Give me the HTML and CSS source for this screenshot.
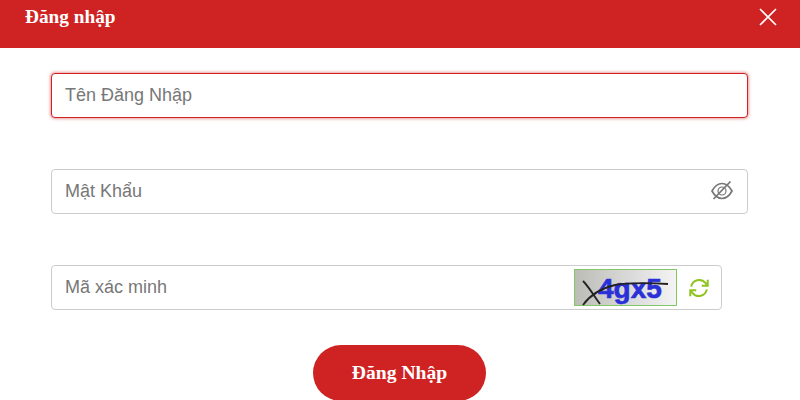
FILE: index.html
```html
<!DOCTYPE html>
<html lang="vi">
<head>
    <meta charset="UTF-8">
    <meta name="viewport" content="width=device-width, initial-scale=1.0">
    <title>Đăng nhập</title>
    <link rel="stylesheet" href="styles.css">
</head>
<body>
    <div class="modal">
        <div class="modal-header">
            <h2 class="modal-title">Đăng nhập</h2>
            <button class="close-btn" aria-label="Close">
                <svg width="18" height="18" viewBox="0 0 18 18"><path d="M1 1L17 17M17 1L1 17" stroke="#fff" stroke-width="1.7" fill="none"/></svg>
            </button>
        </div>
        <form class="login-form">
            <div class="field field-focus">
                <span class="placeholder">Tên Đăng Nhập</span>
            </div>
            <div class="field">
                <span class="placeholder">Mật Khẩu</span>
                <svg class="eye-icon" width="22" height="21" viewBox="0 0 22 21" fill="none" stroke="#777" stroke-width="1.7">
                    <path d="M1 10C4 4.5 7 2.5 11 2.5S18 4.5 21 10C18 15.5 15 17.5 11 17.5S4 15.5 1 10Z"/>
                    <circle cx="11" cy="10" r="4" stroke-width="1.2"/>
                    <path d="M19.5 0.5L2.5 18"/>
                </svg>
            </div>
            <div class="field field-captcha">
                <span class="placeholder">Mã xác minh</span>
                <svg class="captcha" width="103" height="37" viewBox="0 0 103 37">
                    <defs>
                        <linearGradient id="captchaBg" x1="0" x2="1" y1="0" y2="0">
                            <stop offset="0" stop-color="#bcbcb6"/>
                            <stop offset="0.55" stop-color="#dadada"/>
                            <stop offset="1" stop-color="#f4f4f4"/>
                        </linearGradient>
                    </defs>
                    <rect x="0.5" y="0.5" width="102" height="36" fill="url(#captchaBg)" stroke="#84c866"/>
                    <text class="captcha-text" x="24" y="29">4gx5</text>
                    <path d="M9 12C15 18 20 27 26 35" stroke="#222" stroke-width="1.8" fill="none"/>
                    <path d="M9 36C14 29 24 20 41 16C58 13 76 14 94 15" stroke="#222" stroke-width="1.8" fill="none"/>
                </svg>
                <svg class="refresh-icon" width="22" height="22" viewBox="0 0 24 24" fill="none" stroke="#8fc31f" stroke-width="2.2">
                    <path d="M3.5 10.5A8.8 8.8 0 0 1 19 6.5L21 9"/>
                    <path d="M21.5 3V9.5H15"/>
                    <path d="M20.5 13.5A8.8 8.8 0 0 1 5 17.5L3 15"/>
                    <path d="M2.5 21V14.5H9"/>
                </svg>
            </div>
            <div class="actions">
                <button type="button" class="submit-btn">Đăng Nhập</button>
            </div>
        </form>
    </div>
</body>
</html>
```
FILE: styles.css
```css
html, body {
    height: 100%;
}

body {
    margin: 0;
    background-color: #fff;
    font-family: 'Liberation Sans', Arial, sans-serif;
    overflow: hidden;
}

.modal-header {
    display: flex;
    justify-content: space-between;
    align-items: flex-start;
    height: 48px;
    box-sizing: border-box;
    padding: 6px 23px 0 25px;
    background-color: #cf2323;
}

.modal-title {
    margin: 0;
    font-family: 'Liberation Serif', 'Times New Roman', serif;
    font-size: 19.3px;
    font-weight: bold;
    line-height: 22px;
    color: #fff;
}

.close-btn {
    display: flex;
    padding: 0;
    margin-top: 2px;
    border: none;
    background: none;
}

.login-form {
    padding: 25px 52px 0 51px;
}

.field {
    display: flex;
    justify-content: space-between;
    align-items: center;
    height: 45px;
    box-sizing: border-box;
    margin-bottom: 51px;
    padding: 0 14px 0 13px;
    border: 1px solid #ccc;
    border-radius: 4px;
    background-color: #fff;
}

.field-focus {
    border-color: #cf2323;
    box-shadow: 0 0 3px 1px rgba(207, 35, 35, 0.45);
}

.field-captcha {
    width: 671px;
    margin-bottom: 35px;
    padding-right: 11px;
}

.placeholder {
    font-size: 18px;
    color: #777;
}

.field-captcha .placeholder {
    flex: 1;
}

.captcha {
    display: block;
    margin-right: 11px;
}

.captcha-text {
    font-family: 'Liberation Sans', Arial, sans-serif;
    font-size: 28px;
    font-weight: bold;
    fill: #2a30d8;
    stroke: #2a30d8;
    stroke-width: 0.6;
}

.actions {
    display: flex;
    justify-content: center;
}

.submit-btn {
    width: 173px;
    height: 56px;
    border: none;
    border-radius: 28px;
    background-color: #cf2323;
    color: #fff;
    font-family: 'Liberation Serif', 'Times New Roman', serif;
    font-size: 19.6px;
    font-weight: bold;
}
```
